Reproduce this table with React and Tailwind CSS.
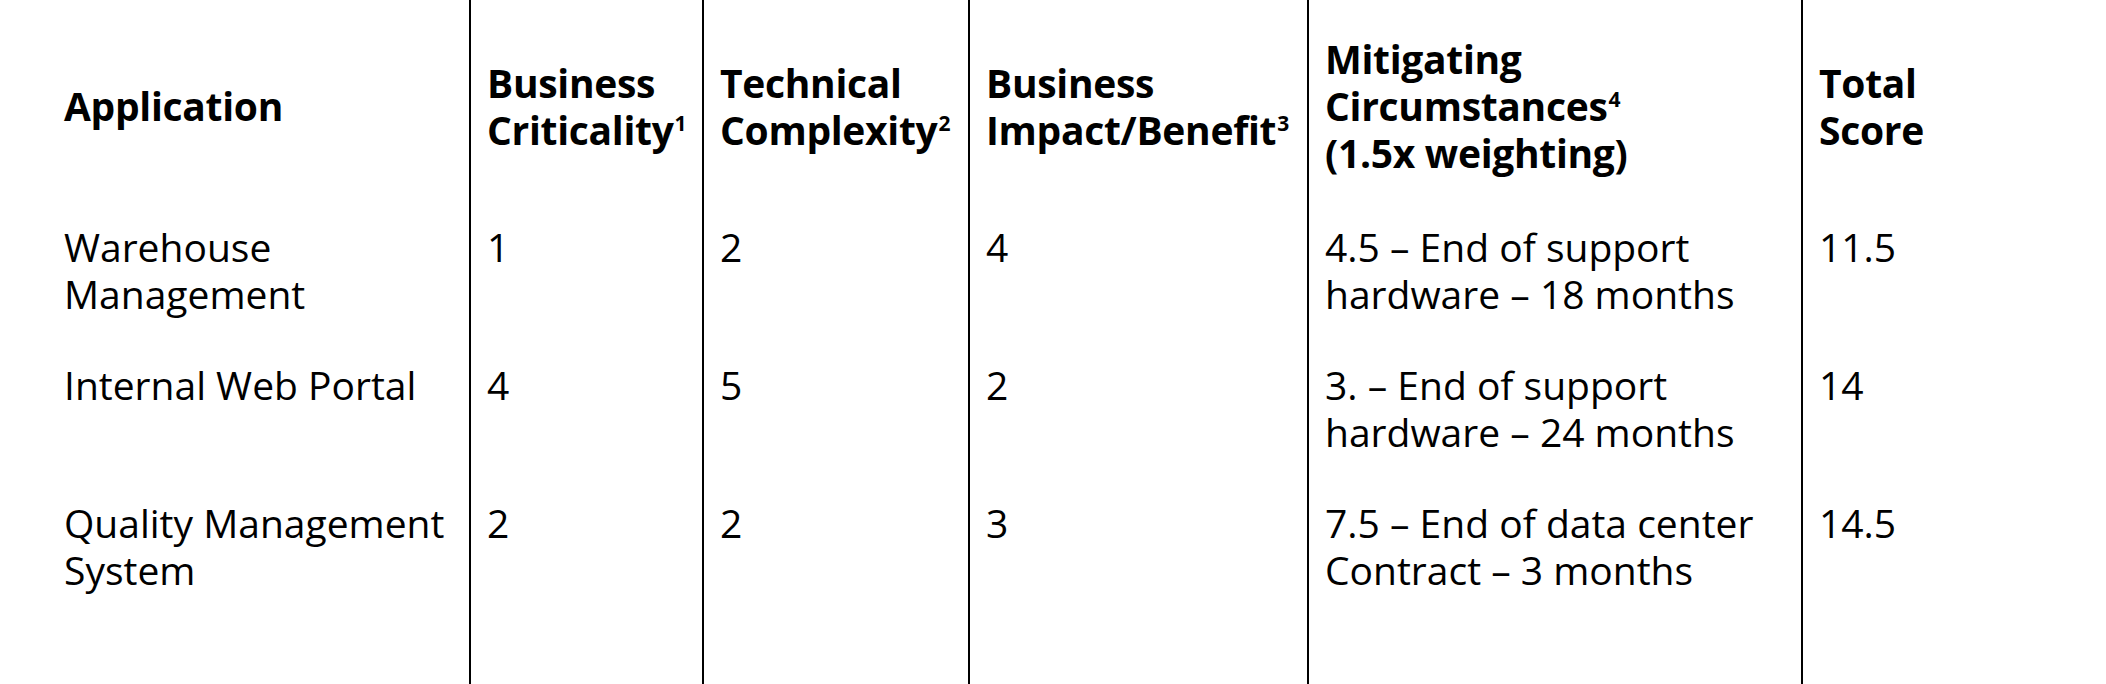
const headers = [
  [["Application"]],
  [["Business"], ["Criticality", "1"]],
  [["Technical"], ["Complexity", "2"]],
  [["Business"], ["Impact/Benefit", "3"]],
  [["Mitigating"], ["Circumstances", "4"], ["(1.5x weighting)"]],
  [["Total"], ["Score"]],
];

const rows = [
  [
    ["Warehouse", "Management"],
    ["1"],
    ["2"],
    ["4"],
    ["4.5 – End of support", "hardware – 18 months"],
    ["11.5"],
  ],
  [
    ["Internal Web Portal"],
    ["4"],
    ["5"],
    ["2"],
    ["3. – End of support", "hardware – 24 months"],
    ["14"],
  ],
  [
    ["Quality Management", "System"],
    ["2"],
    ["2"],
    ["3"],
    ["7.5 – End of data center", "Contract – 3 months"],
    ["14.5"],
  ],
];

// first column has no left rule, the rest get a 2px black line
function cellPad(i) {
  return i === 0 ? "pl-[64px]" : "border-l-2 border-black pl-[16px]";
}

export default function App() {
  return (
    <div className="w-[2106px] h-[684px] bg-white text-black font-['Open_Sans',sans-serif] text-[39px] leading-[47px] overflow-hidden">
      <div className="grid h-full grid-cols-[469px_233px_266px_339px_494px_1fr] grid-rows-[211px_auto_auto_1fr]">
        {headers.map((h, i) => (
          <div key={i} className={`${cellPad(i)} flex items-center font-bold tracking-[-0.3px]`}>
            <div>
              {h.map(([text, note], j) => (
                <div key={j} className="whitespace-nowrap">
                  {text}
                  {note && (
                    <span className="text-[21px] leading-none align-[14px] ml-[1px]">{note}</span>
                  )}
                </div>
              ))}
            </div>
          </div>
        ))}
        {rows.map((r, ri) =>
          r.map((c, i) => (
            <div key={`${ri}-${i}`} className={`${cellPad(i)} pt-[12px] pb-[32px]`}>
              {c.map((l, j) => (
                <div key={j} className="whitespace-nowrap">
                  {l}
                </div>
              ))}
            </div>
          ))
        )}
      </div>
    </div>
  );
}
